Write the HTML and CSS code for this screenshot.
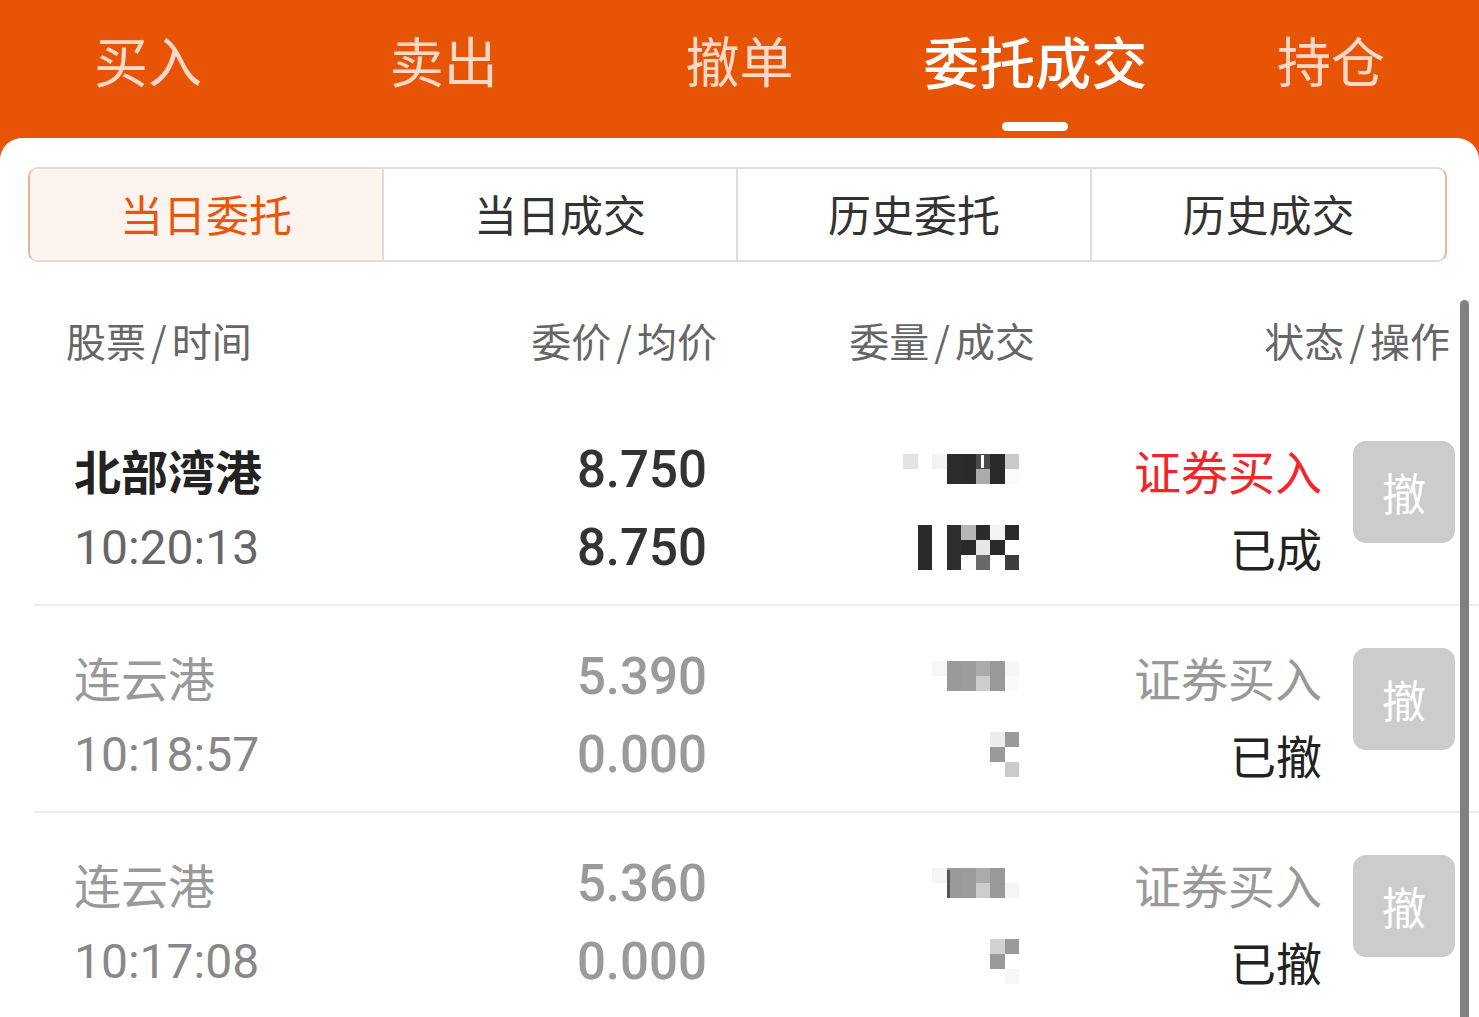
FILE: index.html
```html
<!DOCTYPE html>
<html lang="zh-CN">
<head>
<meta charset="utf-8">
<title>委托成交</title>
<link rel="stylesheet" href="styles.css">
</head>
<body>
<div class="app">
  <header class="topbar">
    <nav class="tabs">
      <div class="tab">买入</div>
      <div class="tab">卖出</div>
      <div class="tab">撤单</div>
      <div class="tab active">委托成交<span class="indicator"></span></div>
      <div class="tab">持仓</div>
    </nav>
  </header>

  <main class="panel">
    <div class="segmented">
      <div class="seg active">当日委托</div>
      <div class="seg">当日成交</div>
      <div class="seg">历史委托</div>
      <div class="seg">历史成交</div>
    </div>

    <div class="thead">
      <div class="th left">股票<span class="slash">/</span>时间</div>
      <div class="th">委价<span class="slash">/</span>均价</div>
      <div class="th">委量<span class="slash">/</span>成交</div>
      <div class="th">状态<span class="slash">/</span>操作</div>
    </div>

    <div class="list">
      <div class="row">
        <div class="cell name-cell">
          <div class="line name strong">北部湾港</div>
          <div class="line time">10:20:13</div>
        </div>
        <div class="cell num-cell">
          <div class="line price">8.750</div>
          <div class="line price">8.750</div>
        </div>
        <div class="cell qty-cell">
          <div class="line">
            <svg class="mosaic" width="117" height="30" viewBox="0 0 117 30" shape-rendering="crispEdges">
              <rect x="0" y="0" width="14.5" height="15" fill="#e3e3e3"/>
              <rect x="29" y="0" width="14.5" height="15" fill="#f3f3f3"/>
              <rect x="43.5" y="0" width="14.5" height="30" fill="#2c2c2c"/>
              <rect x="58" y="0" width="14.5" height="30" fill="#2a2a2a"/>
              <rect x="72.5" y="0" width="14.5" height="15" fill="#4a4a4a"/>
              <rect x="72.5" y="15" width="14.5" height="15" fill="#ababab"/>
              <rect x="78" y="1" width="3" height="13" fill="#ffffff"/>
              <rect x="87" y="0" width="14.5" height="30" fill="#2a2a2a"/>
              <rect x="101.5" y="0" width="14.5" height="15" fill="#c9c9c9"/>
              <rect x="101.5" y="15" width="14.5" height="15" fill="#fbfbfb"/>
            </svg>
          </div>
          <div class="line">
            <svg class="mosaic" width="117" height="45" viewBox="0 0 117 45" shape-rendering="crispEdges">
              <rect x="14.5" y="0" width="14.5" height="45" fill="#2a2a2a"/>
              <rect x="43.5" y="0" width="14.5" height="45" fill="#2e2e2e"/>
              <rect x="58" y="0" width="14.5" height="15" fill="#b6b6b6"/>
              <rect x="58" y="15" width="14.5" height="15" fill="#2a2a2a"/>
              <rect x="58" y="30" width="14.5" height="15" fill="#fbfbfb"/>
              <rect x="72.5" y="0" width="14.5" height="15" fill="#2a2a2a"/>
              <rect x="72.5" y="15" width="14.5" height="15" fill="#e6e6e6"/>
              <rect x="72.5" y="30" width="14.5" height="15" fill="#686868"/>
              <rect x="87" y="0" width="14.5" height="15" fill="#f4f4f4"/>
              <rect x="87" y="15" width="14.5" height="15" fill="#2a2a2a"/>
              <rect x="101.5" y="0" width="14.5" height="15" fill="#2a2a2a"/>
              <rect x="101.5" y="30" width="14.5" height="15" fill="#3c3c3c"/>
            </svg>
          </div>
        </div>
        <div class="cell status-cell">
          <div class="line status red">证券买入</div>
          <div class="line state">已成</div>
        </div>
        <div class="cell btn-cell"><button class="cancel">撤</button></div>
      </div>

      <div class="row dim">
        <div class="cell name-cell">
          <div class="line name">连云港</div>
          <div class="line time">10:18:57</div>
        </div>
        <div class="cell num-cell">
          <div class="line price">5.390</div>
          <div class="line price">0.000</div>
        </div>
        <div class="cell qty-cell">
          <div class="line">
            <svg class="mosaic" width="117" height="30" viewBox="0 0 117 30" shape-rendering="crispEdges">
              <rect x="29" y="0" width="14.5" height="15" fill="#f7f7f7"/>
              <rect x="43.5" y="0" width="14.5" height="30" fill="#9a9a9a"/>
              <rect x="58" y="0" width="14.5" height="30" fill="#9c9c9c"/>
              <rect x="72.5" y="0" width="14.5" height="15" fill="#ababab"/>
              <rect x="72.5" y="15" width="14.5" height="15" fill="#cccccc"/>
              <rect x="87" y="0" width="14.5" height="30" fill="#999999"/>
              <rect x="101.5" y="0" width="14.5" height="15" fill="#f6f6f6"/>
              <rect x="101.5" y="15" width="14.5" height="15" fill="#fafafa"/>
            </svg>
          </div>
          <div class="line">
            <svg class="mosaic" width="117" height="45" viewBox="0 0 117 45" shape-rendering="crispEdges">
              <rect x="87" y="0" width="14.5" height="15" fill="#ececec"/>
              <rect x="87" y="15" width="14.5" height="15" fill="#9a9a9a"/>
              <rect x="101.5" y="0" width="14.5" height="15" fill="#9a9a9a"/>
              <rect x="101.5" y="30" width="14.5" height="15" fill="#cbcbcb"/>
            </svg>
          </div>
        </div>
        <div class="cell status-cell">
          <div class="line status">证券买入</div>
          <div class="line state">已撤</div>
        </div>
        <div class="cell btn-cell"><button class="cancel">撤</button></div>
      </div>

      <div class="row dim">
        <div class="cell name-cell">
          <div class="line name">连云港</div>
          <div class="line time">10:17:08</div>
        </div>
        <div class="cell num-cell">
          <div class="line price">5.360</div>
          <div class="line price">0.000</div>
        </div>
        <div class="cell qty-cell">
          <div class="line">
            <svg class="mosaic" width="117" height="30" viewBox="0 0 117 30" shape-rendering="crispEdges">
              <rect x="29" y="0" width="14.5" height="15" fill="#f5f5f5"/>
              <rect x="43.5" y="0" width="14.5" height="30" fill="#9a9a9a"/>
              <rect x="44" y="2" width="3" height="28" fill="#555555"/>
              <rect x="58" y="0" width="14.5" height="30" fill="#9c9c9c"/>
              <rect x="72.5" y="0" width="14.5" height="15" fill="#ababab"/>
              <rect x="72.5" y="15" width="14.5" height="15" fill="#cccccc"/>
              <rect x="87" y="0" width="14.5" height="30" fill="#999999"/>
              <rect x="101.5" y="15" width="14.5" height="15" fill="#f5f5f5"/>
            </svg>
          </div>
          <div class="line">
            <svg class="mosaic" width="117" height="45" viewBox="0 0 117 45" shape-rendering="crispEdges">
              <rect x="87" y="0" width="14.5" height="15" fill="#d2d2d2"/>
              <rect x="87" y="15" width="14.5" height="15" fill="#9a9a9a"/>
              <rect x="101.5" y="0" width="14.5" height="15" fill="#9a9a9a"/>
              <rect x="101.5" y="30" width="14.5" height="15" fill="#f7f7f7"/>
            </svg>
          </div>
        </div>
        <div class="cell status-cell">
          <div class="line status">证券买入</div>
          <div class="line state">已撤</div>
        </div>
        <div class="cell btn-cell"><button class="cancel">撤</button></div>
      </div>
    </div>

    <div class="scrollbar"></div>
  </main>
</div>
</body>
</html>
```

FILE: styles.css
```css
* { box-sizing: border-box; }

html, body {
  margin: 0;
  padding: 0;
  background: #e75405;
}

body {
  font-family: "Noto Sans CJK SC", "Noto Sans", sans-serif;
  width: 1479px;
  height: 1017px;
  overflow: hidden;
}

.app {
  display: flex;
  flex-direction: column;
  height: 1017px;
}

.topbar {
  background: #e75405;
  height: 138px;
  flex: none;
}

.tabs {
  display: grid;
  grid-template-columns: repeat(5, 1fr);
  padding-top: 27px;
}

.tab {
  position: relative;
  text-align: center;
  font-size: 54px;
  line-height: 66px;
  color: rgba(255, 255, 255, 0.78);
}

.tab.active {
  color: #ffffff;
  font-size: 56px;
  font-weight: 500;
}

.indicator {
  position: absolute;
  left: 50%;
  top: 95px;
  width: 66px;
  height: 9px;
  margin-left: -33px;
  background: #ffffff;
  border-radius: 5px;
}

.panel {
  position: relative;
  flex: 1;
  background: #ffffff;
  border-radius: 22px 22px 0 0;
  overflow: hidden;
}

.segmented {
  display: grid;
  grid-template-columns: 352px 354px 354px 1fr;
  margin: 29px 32px 0 28px;
  height: 95px;
  border: 2px solid #dcdde1;
  border-left-color: #e6b59c;
  border-right-color: #e6b59c;
  border-radius: 10px;
  overflow: hidden;
}

.seg {
  display: flex;
  align-items: center;
  justify-content: center;
  font-size: 43px;
  color: #333333;
  border-left: 2px solid #dcdde1;
  padding-bottom: 3px;
}

.seg:first-child {
  border-left: none;
}

.seg.active {
  background: #fdf3ef;
  color: #e8560c;
}

.thead {
  display: grid;
  grid-template-columns: 334px 317px 318px 415px;
  padding: 55px 29px 0 66px;
  height: 137px;
}

.th {
  font-size: 40px;
  line-height: 46px;
  color: #666666;
  text-align: right;
}

.th.left {
  text-align: left;
}

.slash {
  margin: 0 5px;
}

.list {
  margin-left: 34px;
}

.row {
  display: grid;
  grid-template-columns: 326px 307px 313px 302px 31px 102px;
  padding: 31px 0 18px 40px;
  border-bottom: 2px solid #eeeeee;
  height: 207px;
}

.cell {
  display: flex;
  flex-direction: column;
}

.line {
  height: 78px;
  display: flex;
  align-items: center;
  white-space: nowrap;
}

.num-cell .line,
.qty-cell .line,
.status-cell .line {
  justify-content: flex-end;
}

.name {
  font-size: 47px;
  color: #222222;
  font-weight: 700;
}

.time {
  font-family: "Roboto", "Liberation Sans", sans-serif;
  font-size: 48px;
  color: #666666;
  font-weight: 400;
}

.price {
  font-family: "Roboto", "Liberation Sans", sans-serif;
  font-size: 51px;
  color: #333333;
  font-weight: 500;
}

.mosaic {
  display: block;
}

.status {
  font-size: 47px;
  color: #999999;
}

.status.red {
  color: #f0262a;
}

.state {
  font-size: 46px;
  color: #222222;
}

.row.dim .name {
  color: #999999;
  font-weight: 400;
}

.row.dim .time {
  color: #888888;
}

.row.dim .price {
  color: #9a9a9a;
}

.btn-cell {
  grid-column: 6;
}

.cancel {
  margin-top: 11px;
  width: 102px;
  height: 102px;
  border: none;
  border-radius: 13px;
  background: #cccccc;
  color: #ffffff;
  font-family: "Noto Sans CJK SC", sans-serif;
  font-size: 44px;
  padding: 0;
}

.scrollbar {
  position: absolute;
  left: 1460px;
  top: 162px;
  width: 9px;
  height: 900px;
  background: #808080;
  border-radius: 5px;
}
```
